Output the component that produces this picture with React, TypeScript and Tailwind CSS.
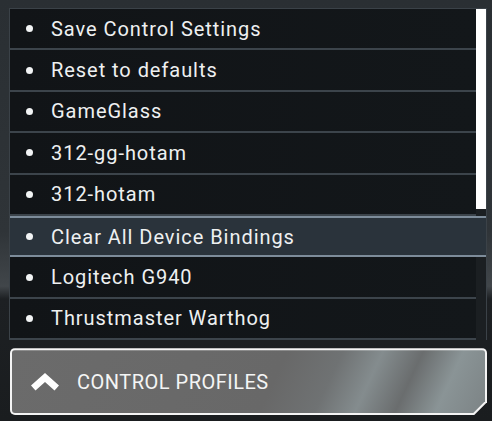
import React from 'react'

const items = [
  'Save Control Settings',
  'Reset to defaults',
  'GameGlass',
  '312-gg-hotam',
  '312-hotam',
  'Clear All Device Bindings',
  'Logitech G940',
  'Thrustmaster Warthog',
]

const ACTIVE = 5

const Row = ({ label, active }: { label: string; active: boolean }) => {
  if (active) {
    return (
      <div className="relative z-10 -mr-[10px] flex h-[41.4px] items-center border-y-2 border-[#7d8c9a] bg-[#2a333b]">
        <span className="ml-[16px] h-[7px] w-[7px] rounded-full bg-[#f2f4f5]" />
        <span className="ml-[18px] text-[20px] tracking-[0.95px] text-[#eef0f1]">{label}</span>
      </div>
    )
  }
  return (
    <div className="flex h-[41.4px] items-center border-b-2 border-[#3c444b] bg-[linear-gradient(90deg,#111417_0%,#13171a_100%)]">
      <span className="ml-[16px] h-[7px] w-[7px] rounded-full bg-[#f2f4f5]" />
      <span className="ml-[18px] text-[20px] tracking-[0.95px] text-[#eef0f1]">{label}</span>
    </div>
  )
}

const App = () => {
  return (
    <div
      className="flex h-[421px] w-[492px] flex-col overflow-hidden bg-[linear-gradient(180deg,#2a2f33_0%,#2f3438_55%,#41464a_68%,#1d2023_71%,#1a1d1f_100%)] pt-[8px]"
      style={{ fontFamily: 'Roboto, "Liberation Sans", sans-serif' }}
    >
      <div className="ml-[9px] mr-[5px] flex border-x border-t border-[#3b4248]">
        <div className="flex flex-1 flex-col">
          {items.map((label, i) => (
            <Row key={label} label={label} active={i === ACTIVE} />
          ))}
        </div>
        <div className="flex w-[10px] flex-col">
          <div className="h-[200px] bg-white" />
          <div className="flex-1 bg-[#1b1f22]" />
        </div>
      </div>

      <div className="ml-[10px] mt-[8px] h-[67px] w-[477px] rounded-[5px] bg-[#f4f4f4] p-[2px] [clip-path:polygon(0_0,100%_0,100%_calc(100%_-_13px),calc(100%_-_13px)_100%,0_100%)]">
        <div className="flex h-full items-center rounded-[3px] bg-[linear-gradient(115deg,#6b6b6b_0%,#686868_55%,#6f7273_66%,#848c8e_74%,#6a6d6e_82%,#8a9496_90%,#7c8385_100%)] pl-[19px] [clip-path:polygon(0_0,100%_0,100%_calc(100%_-_12px),calc(100%_-_12px)_100%,0_100%)]">
          <svg width="28" height="18" viewBox="0 0 28 18" className="shrink-0">
            <path d="M14 0 L28 12.5 L23.5 17.5 L14 9 L4.5 17.5 L0 12.5 Z" fill="#ffffff" />
          </svg>
          <span className="ml-[18px] text-[20px] tracking-[0.5px] text-[#f4f5f5]">CONTROL PROFILES</span>
        </div>
      </div>
    </div>
  )
}

export default App
